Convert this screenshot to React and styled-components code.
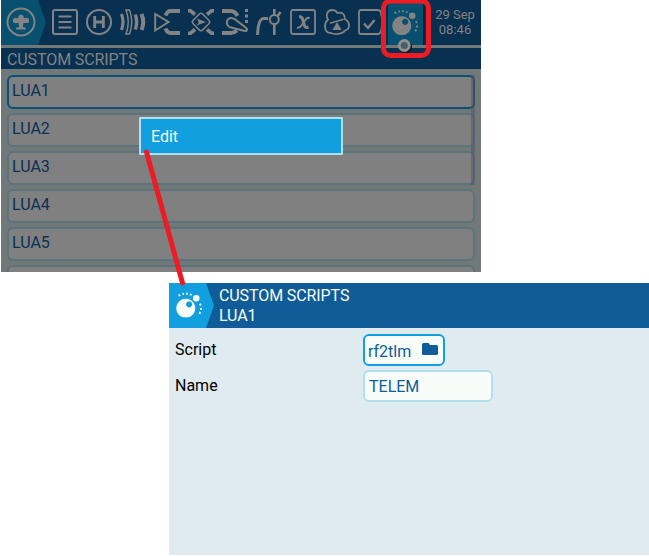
import React from "react";
import styled, { createGlobalStyle, css } from "styled-components";

const Global = createGlobalStyle`
  * { box-sizing: border-box; }
  body { margin: 0; background: #fff; overflow: hidden; }
`;

const Page = styled.main`
  position: relative;
  width: 649px;
  height: 556px;
  display: flex;
  flex-direction: column;
  gap: 11px;
  overflow: hidden;
  background: #fff;
  font: 16px/20px Roboto, "Liberation Sans", sans-serif;
  svg { display: block; flex: none; }
`;

const ListScreen = styled.section`
  width: 480px;
  height: 272px;
  margin-left: 1px;
  display: flex;
  flex-direction: column;
  flex: none;
  overflow: hidden;
  position: relative;
  background: #707878;
`;

const TopBar = styled.header`
  height: 45px;
  flex: none;
  display: flex;
  background: #083050;
  color: #838383;
`;

const HomeTab = styled.div`
  width: 45px;
  height: 45px;
  margin-right: 6px;
  flex: none;
`;

const Tabs = styled.nav`
  display: flex;
  flex: none;
  gap: 8px;
  padding-top: 9px;
`;

const ActiveTab = styled.div`
  width: 35px;
  height: 43px;
  margin: 3px 0 0 4px;
  padding: 6px 0 0 4px;
  flex: none;
  background: #08506f;
  box-shadow: 1px 1px 2px #03182a;
`;

const Clock = styled.time`
  width: 62px;
  flex: none;
  margin: 7px 0 0 1px;
  display: flex;
  flex-direction: column;
  text-align: center;
  font-size: 13px;
  line-height: 15px;
`;

const TitleBar = styled.h1`
  height: 24px;
  flex: none;
  margin: 0;
  padding: 0 6px;
  border-top: 3px solid #707878;
  background: #083050;
  color: #838383;
  font-size: 16px;
  font-weight: 400;
  line-height: 24px;
  letter-spacing: -0.1px;
`;

const List = styled.ul`
  list-style: none;
  margin: 0;
  padding: 6px;
  display: flex;
  flex-direction: column;
  gap: 4px;
`;

const ListItem = styled.li`
  height: 34px;
  flex: none;
  padding: 3px;
  border: 2px solid ${(p) => (p.$selected ? "#08507a" : "#5a737c")};
  border-radius: 6px;
  background: #808080;
  color: #083058;
  line-height: 21px;
`;

const Scrollbar = styled.div`
  position: absolute;
  left: 470px;
  top: 75px;
  width: 4px;
  height: 110px;
  background: rgba(84, 80, 96, 0.5);
`;

const PopupMenu = styled.div`
  position: absolute;
  left: 138px;
  top: 117px;
  width: 204px;
  height: 38px;
  padding: 0 10px;
  border: 2px solid #b0e0f0;
  border-radius: 1px;
  background: #129fe0;
  color: #f8fcf8;
  line-height: 35px;
`;

const EditScreen = styled.section`
  width: 480px;
  height: 272px;
  margin-left: 169px;
  flex: none;
  background: #e0ebef;
`;

const EditHeader = styled.header`
  height: 45px;
  display: flex;
  gap: 5px;
  background: #105c98;
  color: #f8fcf8;
`;

const HeaderText = styled.div`
  display: flex;
  flex-direction: column;
  padding-top: 3px;
  line-height: 20px;
  letter-spacing: -0.1px;
`;

const Form = styled.div`
  display: grid;
  grid-template-columns: 188px auto;
  grid-auto-rows: 32px;
  row-gap: 4px;
  justify-items: start;
  padding: 6px;
`;

const Label = styled.label`
  line-height: 31px;
  color: #000;
`;

const field = css`
  height: 32px;
  border-radius: 6px;
  background: #f8fcf8;
  color: #105c98;
  font: 16px/20px Roboto, "Liberation Sans", sans-serif;
`;

const FileButton = styled.button`
  ${field}
  width: 82px;
  padding: 4px 5px 0 3px;
  display: flex;
  align-items: center;
  justify-content: space-between;
  border: 2px solid #129fe0;
  svg { margin-top: -5px; }
`;

const TextField = styled.div`
  ${field}
  width: 130px;
  padding: 5px 4px 3px;
  border: 2px solid #b0e0f0;
`;

const Annotation = styled.svg`
  position: absolute;
  inset: 0;
  pointer-events: none;
`;

const Icon = ({ children }) => (
  <svg width="26" height="26" viewBox="0 0 26 26" fill="none" stroke="currentColor" strokeWidth="2">
    {children}
  </svg>
);

const ModelMenuIcon = () => (
  <Icon>
    <rect x="1" y="1" width="24" height="24" rx="2" />
    <path d="M6.5 7.5h13M6.5 13h13M6.5 18.5h13" strokeWidth="2.2" />
  </Icon>
);

const HeliIcon = () => (
  <Icon>
    <circle cx="13" cy="13" r="12" />
    <path d="M8.7 7v12M17.3 7v12M8.7 13h8.6" strokeWidth="2.9" />
  </Icon>
);

const FlightModesIcon = () => (
  <Icon>
    <path d="M1.5 5Q4.5 13 1.5 21" strokeWidth="3.2" />
    <path d="M6 1h3.5q4.5 12 0 24H6q4.5-12 0-24z" strokeWidth="1.5" />
    <path d="M15.3 5.5Q18 13 15.3 20.5" strokeWidth="3.4" />
    <path d="M21.5 5Q25 13 21.5 21" strokeWidth="4" />
  </Icon>
);

const InputsIcon = () => (
  <Icon>
    <path d="M1.2 5v16.5L14.5 13z" />
    <path d="M26 2H16Q13.5 2 11.5 6.5M26 24H16Q13.5 24 11.5 19.5" strokeWidth="4" />
  </Icon>
);

const MixesIcon = () => (
  <Icon>
    <path d="M0 1.8h2.5L7 5.5M26 1.8h-2.5L19 5.500M0 24.2h2.5l4.500-3.700M26 24.2h-2.5l-4.500-3.700" strokeWidth="3.6" />
    <rect x="6.2" y="6.2" width="13.6" height="13.6" rx="2.5" transform="rotate(45 13 13)" strokeWidth="1.5" />
    <path d="M8.8 9.500L18 13l-9.200 3.500 2-3.500z" fill="currentColor" stroke="none" />
  </Icon>
);

const OutputsIcon = () => (
  <Icon>
    <path d="M0 2h9q4 0 6.5 5M0 24h9q3 0 6-2.5" strokeWidth="4" />
    <path d="M5 14.6C4 10.8 7.6 8 11.6 9.6q2 .8 3.6 2.4l9 7c1.6 1.7.6 3.3-1.4 2.9L9 18.5q-3.3-.8-4-3.9z" />
    <path d="M23 0h3v3h-3zM23 5.5h3v3h-3zM23 11h3v3h-3z" fill="currentColor" stroke="none" />
  </Icon>
);

const CurvesIcon = () => (
  <Icon>
    <path d="M1.6 26Q2 9.5 8 9.5h4" strokeWidth="3" />
    <circle cx="18.3" cy="10.5" r="4.5" />
    <path d="M18.3 0v6M18.3 15v11M21.5 7.3l3-4.3" strokeWidth="2.6" />
  </Icon>
);

const GlobalVarsIcon = () => (
  <Icon>
    <rect x="1" y="1" width="24" height="24" rx="2" strokeWidth="1.8" />
    <path d="M9 8q2.500-.8 3.500 2l2 6.500q.8 2.800 4 1.500" strokeWidth="3" />
    <path d="M7 18.500q2 .8 4-1.700l4.500-6q1.800-2.700 4.200-1.700" strokeWidth="2" />
  </Icon>
);

const LogicIcon = () => (
  <Icon>
    <path
      d="M4 10.5C1.5 6.5 3 1 8 1c3 0 4.5 1.2 5.3 3 4.2-1.3 8 1 7.4 6 3.2 1.7 4.5 4.4 4.3 7-.3 3-2 4-4 4.5-2.8 4-10 4.3-14.5 2.5C2 24 1 20.5 1 17c0-3 1.2-5 3-6.5z"
      strokeWidth="1.8"
    />
    <path d="M6 14.3l13.5-4" strokeWidth="1.5" />
    <path d="M13 13l4.5 8h-9z" fill="currentColor" stroke="none" />
  </Icon>
);

const SpecialIcon = () => (
  <Icon>
    <path d="M20 1H3Q1 1 1 3v20q0 2 2 2h17q2 0 3-3l2-8-2-10q-1-3-3-3z" strokeWidth="1.8" />
    <path d="M6 14.5l4 4.5 6.5-8" strokeWidth="2.4" />
  </Icon>
);

const LuaIcon = () => (
  <Icon>
    <g fill="currentColor" stroke="none">
      <path fillRule="evenodd" d="M9.7 7.2a9.5 9.5 0 1 0 .1 0zM13.2 9.7a3.1 3.1 0 1 1-.1 0z" />
      <circle cx="20.2" cy="6.8" r="3.3" />
    </g>
    <path d="M2.5 4.2l1.8-.9M6.5 2.6l1.5-.3M10.2 2.2h1.7M14 2.8l1.5.5M24 12.2l.7 1.8M25 16.5v2M24.3 20.5l-1 1.8" strokeWidth="1.9" />
  </Icon>
);

const PlaneTab = () => (
  <svg width="45" height="45" viewBox="0 0 45 45">
    <path d="M0 0h37l8 22.5-8 22.5H0z" fill="#08506f" />
    <circle cx="20" cy="22" r="13.5" fill="none" stroke="currentColor" strokeWidth="2" />
    <path
      d="M17.500 16q2.500-3 5 0l.3 2h3.700q1.500 0 1.500 2v1.800q0 1.200-1.500 1.200h-4l-.6 4 3 .8v1.700h-9.800v-1.700l3-.8-.6-4h-4q-1.500 0-1.500-1.200v-1.800q0-2 1.500-2h3.700z"
      fill="currentColor"
    />
  </svg>
);

const LuaBadge = () => (
  <svg width="45" height="45" viewBox="0 0 45 45">
    <path d="M0 0h37l8 22.5-8 22.5H0z" fill="#129fe0" />
    <g transform="translate(7 8.5)">
      <LuaIcon />
    </g>
  </svg>
);

const FolderIcon = () => (
  <svg width="16" height="13" viewBox="0 0 16 13">
    <path d="M1.5 0h5l1.5 2h6.5Q16 2 16 3.5v7q0 1.5-1.5 1.5h-13Q0 12 0 10.5v-9Q0 0 1.5 0z" fill="#105c98" />
  </svg>
);

const tabIcons = [
  ModelMenuIcon, HeliIcon, FlightModesIcon, InputsIcon, MixesIcon,
  OutputsIcon, CurvesIcon, GlobalVarsIcon, LogicIcon, SpecialIcon,
];
const scripts = ["LUA1", "LUA2", "LUA3", "LUA4", "LUA5", ""];

export default function App() {
  return (
    <Page>
      <Global />
      <ListScreen>
        <TopBar>
          <HomeTab><PlaneTab /></HomeTab>
          <Tabs>{tabIcons.map((Glyph, i) => <Glyph key={i} />)}</Tabs>
          <ActiveTab><LuaIcon /></ActiveTab>
          <Clock><span>29 Sep</span><span>08:46</span></Clock>
        </TopBar>
        <TitleBar>CUSTOM SCRIPTS</TitleBar>
        <List>
          {scripts.map((name, i) => <ListItem key={i} $selected={i === 0}>{name}</ListItem>)}
        </List>
        <Scrollbar />
        <PopupMenu>Edit</PopupMenu>
      </ListScreen>
      <EditScreen>
        <EditHeader>
          <LuaBadge />
          <HeaderText><span>CUSTOM SCRIPTS</span><span>LUA1</span></HeaderText>
        </EditHeader>
        <Form>
          <Label>Script</Label>
          <FileButton>rf2tlm<FolderIcon /></FileButton>
          <Label>Name</Label>
          <TextField>TELEM</TextField>
        </Form>
      </EditScreen>
      <Annotation width="649" height="556" fill="none">
        <circle cx="405.5" cy="47" r="5" stroke="#03182a" strokeWidth="3" />
        <circle cx="404.3" cy="45.5" r="5" fill="#48606c" stroke="#909090" strokeWidth="2.8" />
        <rect x="383.5" y="1" width="45" height="54.5" rx="7" stroke="#ed1c24" strokeWidth="5" />
        <path d="M146.5 152L182.5 283" stroke="#ed1c24" strokeWidth="5" strokeLinecap="round" />
      </Annotation>
    </Page>
  );
}
